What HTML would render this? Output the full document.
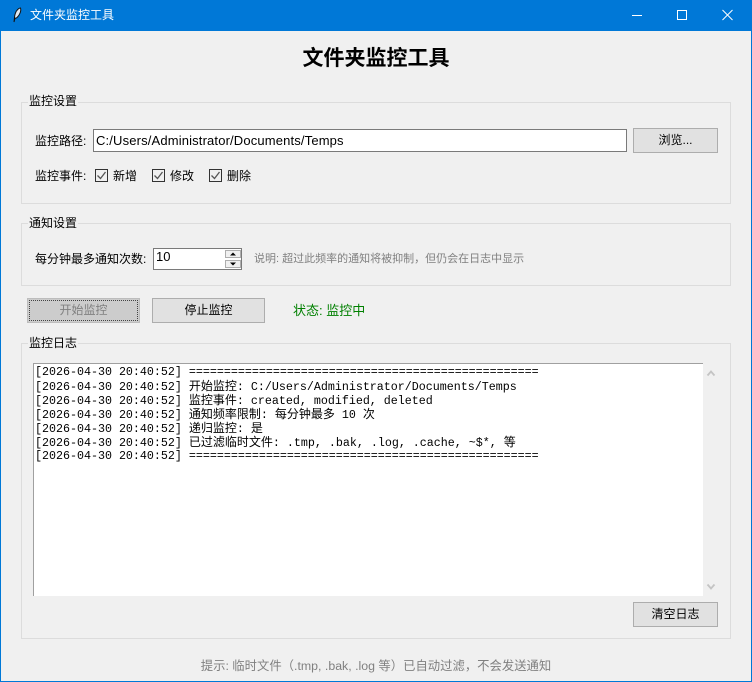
<!DOCTYPE html>
<html lang="zh"><head><meta charset="utf-8"><title>文件夹监控工具</title>
<style>
*{box-sizing:border-box;margin:0;padding:0}
html,body{width:752px;height:682px;overflow:hidden;background:#f0f0f0}
body{position:relative;font-family:"Liberation Sans","Noto Sans CJK SC",sans-serif;font-size:12px;color:#000}
.a{position:absolute;white-space:nowrap;line-height:16px}
.box{position:absolute}
.group{position:absolute;border:1px solid #dcdcdc;left:21px;width:710px}
.lg{position:absolute;left:28px;background:#f0f0f0;padding:0 1px;line-height:16px;white-space:nowrap}
.btn{position:absolute;background:#e1e1e1;border:1px solid #adadad;text-align:center;line-height:23px;white-space:nowrap}
.cb{position:absolute;width:13px;height:13px;top:169px;border:1px solid #333;background:#f0f0f0}
.cb svg{position:absolute;left:0;top:0}
.log{position:absolute;left:35px;font-family:"Liberation Mono",monospace;font-size:11.67px;line-height:14px;white-space:pre;height:14px}
.log b{font-weight:normal;font-family:"Noto Sans CJK SC",sans-serif;font-size:12px;line-height:14px}
</style></head><body>
<div class="box" style="left:0;top:0;width:752px;height:682px;border:1px solid #0078d7;border-top:0"></div>
<div class="box" style="left:0;top:0;width:752px;height:31px;background:#0078d7"></div>
<svg class="box" style="left:12px;top:7px" width="12" height="16" viewBox="0 0 12 16"><path d="M2 15 C2.500 11 2.500 8 3.500 6 C4.500 3 7 1 8.500 1 C9.500 4 7.500 8 5.500 10 C4.500 11 3.500 11.500 3 11 Z" fill="#dfe9f2" stroke="#111" stroke-width="1"/></svg>
<div class="a" style="left:30px;top:7px;color:#fff;font-size:12px">文件夹监控工具</div>
<svg class="box" style="left:632px;top:9px" width="110" height="14" viewBox="0 0 110 14" fill="none" stroke="#fff" stroke-width="1"><path d="M0 6.500H10"/><rect x="45.500" y="1.500" width="9" height="9"/><path d="M90.500 1L100.500 11M100.500 1L90.500 11"/></svg>

<div class="a" style="left:0;width:752px;text-align:center;top:45px;font-size:21px;line-height:28px;font-weight:bold">文件夹监控工具</div>

<div class="group" style="top:102px;height:102px"></div>
<div class="lg" style="top:93px">监控设置</div>
<div class="a" style="left:35px;top:133px">监控路径:</div>
<div class="box" style="left:93px;top:129px;width:534px;height:23px;background:#fff;border:1px solid #7a7a7a"></div>
<div class="a" style="left:96px;top:133px;font-size:13px;letter-spacing:.15px">C:/Users/Administrator/Documents/Temps</div>
<div class="btn" style="left:633px;top:128px;width:85px;height:25px">浏览...</div>
<div class="a" style="left:35px;top:168px">监控事件:</div>
<div class="cb" style="left:95px"><svg width="11" height="11" viewBox="0 0 11 11" fill="none" stroke="#555" stroke-width="1.300"><path d="M1.500 5.500L4.500 8.500L9.500 2"/></svg></div>
<div class="a" style="left:113px;top:168px">新增</div>
<div class="cb" style="left:152px"><svg width="11" height="11" viewBox="0 0 11 11" fill="none" stroke="#555" stroke-width="1.300"><path d="M1.500 5.500L4.500 8.500L9.500 2"/></svg></div>
<div class="a" style="left:170px;top:168px">修改</div>
<div class="cb" style="left:209px"><svg width="11" height="11" viewBox="0 0 11 11" fill="none" stroke="#555" stroke-width="1.300"><path d="M1.500 5.500L4.500 8.500L9.500 2"/></svg></div>
<div class="a" style="left:227px;top:168px">删除</div>

<div class="group" style="top:223px;height:63px"></div>
<div class="lg" style="top:215px">通知设置</div>
<div class="a" style="left:35px;top:251px">每分钟最多通知次数:</div>
<div class="box" style="left:153px;top:248px;width:89px;height:22px;background:#fff;border:1px solid #7a7a7a"></div>
<div class="a" style="left:156px;top:249px;font-size:13px">10</div>
<div class="box" style="left:225px;top:250px;width:16px;height:8px;background:#f0f0f0;border:1px solid #adadad"></div>
<div class="box" style="left:225px;top:260px;width:16px;height:8px;background:#f0f0f0;border:1px solid #adadad"></div>
<svg class="box" style="left:225px;top:250px" width="16" height="18" viewBox="0 0 16 18"><path d="M8 2.500L11 5.500H5Z M5 12.500H11L8 15.500Z" fill="#000"/></svg>
<div class="a" style="left:254px;top:251px;font-size:11px;color:#808080">说明: 超过此频率的通知将被抑制，但仍会在日志中显示</div>

<div class="btn" style="left:27px;top:298px;width:113px;height:25px;background:#ccc;border-color:#bdbdbd;color:#808080">开始监控</div>
<div class="box" style="left:29px;top:300px;width:109px;height:21px;border:1px dotted #444"></div>
<div class="btn" style="left:152px;top:298px;width:113px;height:25px">停止监控</div>
<div class="a" style="left:293px;top:303px;color:#008000;font-size:13px">状态: 监控中</div>

<div class="group" style="top:343px;height:296px"></div>
<div class="lg" style="top:335px">监控日志</div>
<div class="box" style="left:33px;top:363px;width:670px;height:233px;background:#fff;border-top:1px solid #a0a0a0;border-left:1px solid #a0a0a0"></div>
<div class="log" style="top:365px">[2026-04-30 20:40:52] ==================================================</div>
<div class="log" style="top:379px">[2026-04-30 20:40:52] <b>开始监控</b>: C:/Users/Administrator/Documents/Temps</div>
<div class="log" style="top:393px">[2026-04-30 20:40:52] <b>监控事件</b>: created, modified, deleted</div>
<div class="log" style="top:407px">[2026-04-30 20:40:52] <b>通知频率限制</b>: <b>每分钟最多</b> 10 <b>次</b></div>
<div class="log" style="top:421px">[2026-04-30 20:40:52] <b>递归监控</b>: <b>是</b></div>
<div class="log" style="top:435px">[2026-04-30 20:40:52] <b>已过滤临时文件</b>: .tmp, .bak, .log, .cache, ~$*, <b>等</b></div>
<div class="log" style="top:449px">[2026-04-30 20:40:52] ==================================================</div>
<svg class="box" style="left:706px;top:368px" width="10" height="224" viewBox="0 0 10 224" fill="none" stroke="#c4c4c4" stroke-width="1.800"><path d="M1.500 7.500L5 3.500L8.500 7.500"/><path d="M1.500 216.500L5 220.500L8.500 216.500"/></svg>
<div class="btn" style="left:633px;top:602px;width:85px;height:25px">清空日志</div>

<div class="a" style="left:0;width:752px;text-align:center;top:658px;color:#808080;font-size:12.350px">提示: 临时文件（.tmp, .bak, .log 等）已自动过滤，不会发送通知</div>
</body></html>
